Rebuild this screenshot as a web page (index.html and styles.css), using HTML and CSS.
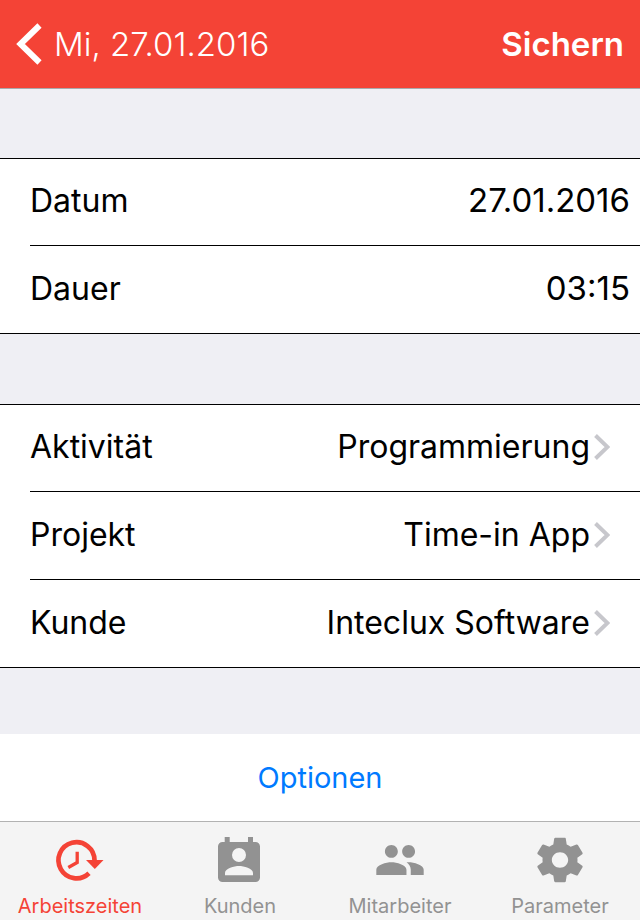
FILE: index.html
```html
<!DOCTYPE html>
<html lang="de">
<head>
  <meta charset="UTF-8">
  <meta name="viewport" content="width=device-width, initial-scale=1">
  <title>Arbeitszeiten</title>
  <link rel="stylesheet" href="styles.css">
</head>
<body>

  <header class="navbar">
    <a class="back" href="#">
      <svg class="back-icon" viewBox="0 0 26 42" aria-hidden="true">
        <path d="M23.500 2.500L4.500 21l19 18.500" fill="none" stroke="currentColor" stroke-width="6"/>
      </svg>
      <span>Mi, 27.01.2016</span>
    </a>
    <button class="save" type="button">Sichern</button>
  </header>

  <main class="content">
    <ul class="group">
      <li class="row">
        <label for="datum">Datum</label>
        <input type="text" id="datum" value="27.01.2016">
      </li>
      <li class="row">
        <label for="dauer">Dauer</label>
        <input type="text" id="dauer" value="03:15">
      </li>
    </ul>

    <ul class="group">
      <li class="row">
        <a class="row-link" href="#">
          <span>Aktivität</span>
          <span class="value">Programmierung</span>
          <svg class="chevron" viewBox="0 0 16 26" aria-hidden="true"><path d="M1.500 1.500L13.500 13l-12 11.500"/></svg>
        </a>
      </li>
      <li class="row">
        <a class="row-link" href="#">
          <span>Projekt</span>
          <span class="value">Time-in App</span>
          <svg class="chevron" viewBox="0 0 16 26" aria-hidden="true"><path d="M1.500 1.500L13.500 13l-12 11.500"/></svg>
        </a>
      </li>
      <li class="row">
        <a class="row-link" href="#">
          <span>Kunde</span>
          <span class="value">Inteclux Software</span>
          <svg class="chevron" viewBox="0 0 16 26" aria-hidden="true"><path d="M1.500 1.500L13.500 13l-12 11.500"/></svg>
        </a>
      </li>
    </ul>

    <button class="options" type="button">Optionen</button>
  </main>

  <nav class="tabbar">
    <a class="tab active" href="#">
      <svg class="tab-icon" viewBox="0 0 56 56" aria-hidden="true">
        <path d="M37 41.200A18 18 0 1 1 42.500 28.300" fill="none" stroke="currentColor" stroke-width="4.700"/>
        <path d="M34 28h17.500l-8.700 9z"/>
        <path d="M25.200 19.700v10.800l-8.900 5" fill="none" stroke="currentColor" stroke-width="3.300"/>
      </svg>
      <span>Arbeitszeiten</span>
    </a>
    <a class="tab" href="#">
      <svg class="tab-icon" viewBox="0 0 56 56" aria-hidden="true">
        <path fill-rule="evenodd" d="M10.500 10h2.200V5h5v5H36V5h5v5h2.500a4.500 4.500 0 0 1 4.500 4.500v31a4.500 4.500 0 0 1-4.500 4.500h-33A4.500 4.500 0 0 1 6 45.500v-31A4.500 4.500 0 0 1 10.500 10zM27 16a7 7 0 1 0 0 14a7 7 0 1 0 0-14zM13 43.300h28v-2.300c0-4.700-9.300-7-14-7s-14 2.300-14 7z"/>
      </svg>
      <span>Kunden</span>
    </a>
    <a class="tab" href="#">
      <svg class="tab-icon" viewBox="-1 -1 26 26" aria-hidden="true">
        <path d="M16 11c1.660 0 2.990-1.340 2.990-3S17.660 5 16 5c-1.660 0-3 1.340-3 3s1.340 3 3 3zm-8 0c1.660 0 2.990-1.340 2.990-3S9.660 5 8 5C6.340 5 5 6.340 5 8s1.340 3 3 3zm0 2c-2.330 0-7 1.170-7 3.500V19h14v-2.500c0-2.330-4.670-3.500-7-3.500zm8 0c-.29 0-.62.02-.97.05 1.160.84 1.970 1.970 1.970 3.450V19h6v-2.500c0-2.330-4.670-3.500-7-3.500z"/>
      </svg>
      <span>Mitarbeiter</span>
    </a>
    <a class="tab" href="#">
      <svg class="tab-icon" viewBox="0 -0.600 24 25.200" preserveAspectRatio="none" aria-hidden="true">
        <path d="M19.430 12.980c.04-.32.07-.64.07-.98s-.03-.66-.07-.98l2.110-1.650c.19-.15.24-.42.12-.64l-2-3.460c-.12-.22-.39-.3-.61-.22l-2.490 1c-.52-.4-1.080-.73-1.690-.98l-.38-2.650C14.460 2.180 14.250 2 14 2h-4c-.25 0-.46.18-.49.42l-.38 2.650c-.61.25-1.170.59-1.690.98l-2.490-1c-.23-.09-.49 0-.61.22l-2 3.460c-.13.22-.07.49.12.64l2.110 1.650c-.04.32-.07.65-.07.98s.03.66.07.98l-2.110 1.650c-.19.15-.24.42-.12.64l2 3.460c.12.22.39.3.61.22l2.490-1c.52.4 1.080.73 1.690.98l.38 2.650c.03.24.24.42.49.42h4c.25 0 .46-.18.49-.42l.38-2.650c.61-.25 1.170-.59 1.690-.98l2.490 1c.23.09.49 0 .61-.22l2-3.460c.12-.22.07-.49-.12-.64l-2.110-1.650zM12 15.500c-1.930 0-3.500-1.570-3.500-3.500s1.570-3.500 3.500-3.500 3.500 1.570 3.500 3.500-1.570 3.500-3.500 3.500z"/>
      </svg>
      <span>Parameter</span>
    </a>
  </nav>

</body>
</html>
```
FILE: styles.css
```css
* {
  box-sizing: border-box;
}

body {
  margin: 0;
  min-height: 100vh;
  display: flex;
  flex-direction: column;
  background: #efeff4;
  color: #000;
  font-family: Inter, Roboto, sans-serif;
  font-size: 33px;
  line-height: 40px;
}

a {
  color: inherit;
  text-decoration: none;
}

button,
input {
  border: none;
  padding: 0;
  font: inherit;
  color: inherit;
  background: none;
}

button {
  cursor: pointer;
}

.navbar {
  display: flex;
  justify-content: space-between;
  align-items: center;
  height: 89px;
  padding: 0 16px;
  background: #f44336;
  border-bottom: 1px solid #a9a9ac;
  color: #fff;
}

.back {
  display: flex;
  align-items: center;
  gap: 12px;
  font-weight: 300;
}

.back-icon {
  width: 26px;
  height: 42px;
}

.save {
  font-weight: 600;
}

.content {
  flex: 1;
  display: flex;
  flex-direction: column;
}

.group {
  list-style: none;
  margin: 69px 0 0;
  padding: 0 0 0 30px;
  background: #fff;
  border-top: 1px solid #000;
  border-bottom: 1px solid #000;
}

.group + .group {
  margin-top: 70px;
}

.row {
  display: flex;
  align-items: center;
  height: 88px;
  padding-bottom: 2px;
  border-bottom: 1px solid #000;
  font-size: 32px;
}

.row:first-child,
.row:last-child {
  height: 87px;
}

.row:last-child {
  border-bottom: none;
}

.row input {
  flex: 1;
  min-width: 0;
  padding: 0 10px 2px 0;
  font-size: 33px;
  text-align: right;
}

.row-link {
  flex: 1;
  display: flex;
  align-items: center;
  padding-right: 30px;
}

.value {
  flex: 1;
  text-align: right;
}

.chevron {
  width: 16px;
  height: 26px;
  margin-left: 4px;
  fill: none;
  stroke: #c7c7cc;
  stroke-width: 4;
}

.options {
  margin-top: auto;
  height: 87px;
  background: #fff;
  color: #007aff;
  font-size: 29px;
}

.tabbar {
  display: flex;
  height: 99px;
  background: #f4f4f4;
  border-top: 1px solid #b2b2b2;
}

.tab {
  flex: 1;
  display: flex;
  flex-direction: column;
  align-items: center;
  padding-top: 10px;
  gap: 6px;
  color: #929292;
  font-size: 20px;
  line-height: 24px;
}

.tab.active {
  color: #f44336;
}

.tab-icon {
  width: 56px;
  height: 56px;
  fill: currentColor;
}
```
